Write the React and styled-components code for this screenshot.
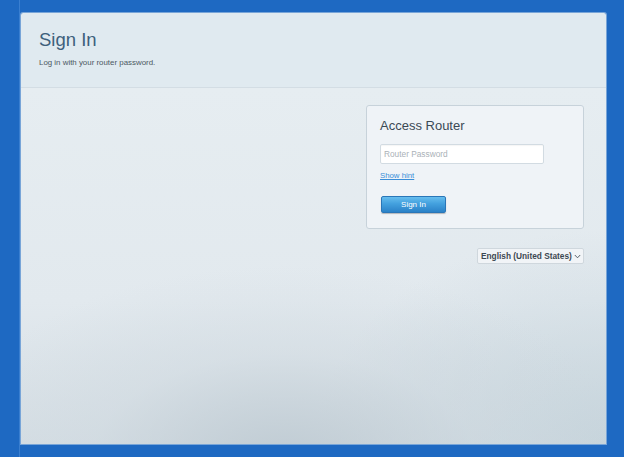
import React from "react";
import styled, { createGlobalStyle } from "styled-components";

const Global = createGlobalStyle`
  html, body { margin: 0; padding: 0; }
  body {
    width: 624px;
    height: 457px;
    overflow: hidden;
    background: #1e69c2;
    font-family: "Liberation Sans", Arial, sans-serif;
  }
`;

const Page = styled.div`
  width: 624px;
  height: 457px;
  box-sizing: border-box;
  padding: 13px 18px 13px 19px;
  display: flex;
`;

const Rail = styled.div`
  width: 1px;
  align-self: stretch;
  margin: -13px 1px -13px 0;
  background: #3a7fd0;
  flex: none;
`;

const Panel = styled.div`
  flex: 1;
  display: flex;
  flex-direction: column;
  border-radius: 2px 2px 0 0;
  overflow: hidden;
  box-shadow: 0 0 0 1px rgba(180, 205, 230, 0.6);
`;

const Header = styled.header`
  height: 75px;
  box-sizing: border-box;
  padding: 15px 18px 0;
  background: #e0eaf0;
  border-bottom: 1px solid #d3dde4;
  flex: none;
`;

const Title = styled.h1`
  margin: 0;
  font-size: 18.5px;
  font-weight: 400;
  color: #3d607c;
  line-height: 24px;
`;

const Subtitle = styled.p`
  margin: 6px 0 0;
  font-size: 7.9px;
  color: #4c5862;
`;

const Body = styled.main`
  flex: 1;
  display: flex;
  flex-direction: column;
  align-items: flex-end;
  padding: 17px 22px 0 0;
  background:
    radial-gradient(ellipse 60% 55% at 45% 105%, rgba(190, 202, 210, 0.95), rgba(205, 215, 222, 0.4) 55%, rgba(230, 237, 241, 0) 100%),
    radial-gradient(ellipse 50% 60% at 100% 100%, rgba(195, 210, 218, 0.8), rgba(230, 237, 241, 0) 100%),
    linear-gradient(180deg, #e6edf1 0%, #e2e9ee 60%, #d5dee4 100%);
`;

const Card = styled.section`
  width: 218px;
  height: 124px;
  box-sizing: border-box;
  border: 1px solid #c7d2da;
  border-radius: 3px;
  background: #eff3f7;
  padding: 12px 13px 0;
  display: flex;
  flex-direction: column;
  align-items: flex-start;
`;

const CardTitle = styled.h2`
  margin: 0;
  font-size: 13px;
  font-weight: 400;
  color: #3b4955;
  line-height: 16px;
`;

const Input = styled.input`
  margin-top: 10px;
  width: 164px;
  height: 20px;
  box-sizing: border-box;
  border: 1px solid #d2dbe2;
  border-radius: 2px;
  background: #ffffff;
  padding: 0 3px;
  font-family: "Liberation Sans", Arial, sans-serif;
  font-size: 8.3px;
  color: #333;
  outline: none;
  box-shadow: inset 0 1px 1px rgba(0, 0, 0, 0.04);
  &::placeholder { color: #aab1b7; }
`;

const Hint = styled.a`
  margin-top: 7px;
  font-size: 7.8px;
  color: #3b8ed8;
  text-decoration: underline;
  cursor: pointer;
`;

const Button = styled.button`
  margin-top: 16px;
  margin-left: 1px;
  width: 65px;
  height: 17px;
  border: 1px solid #2a76b8;
  border-radius: 2px;
  background: linear-gradient(180deg, #66bdee 0%, #43a0de 45%, #2b82c8 100%);
  color: #ffffff;
  font-family: "Liberation Sans", Arial, sans-serif;
  font-size: 8px;
  padding: 0;
  box-shadow: 0 1px 1px rgba(0, 0, 0, 0.25);
  cursor: pointer;
`;

const Lang = styled.div`
  margin-top: 19px;
  width: 107px;
  height: 16px;
  box-sizing: border-box;
  border: 1px solid #cfd7dd;
  border-radius: 2px;
  background: #f1f4f7;
  display: flex;
  align-items: center;
  justify-content: space-between;
  padding: 0 2px 0 3px;
  font-size: 8.3px;
  font-weight: 700;
  color: #3d4852;
`;

const Chevron = () => (
  <svg width="7" height="5" viewBox="0 0 7 5">
    <path d="M0.8 1 L3.5 3.8 L6.2 1" fill="none" stroke="#4a545c" strokeWidth="0.9" />
  </svg>
);

export default function App() {
  return (
    <>
      <Global />
      <Page>
        <Rail />
        <Panel>
          <Header>
            <Title>Sign In</Title>
            <Subtitle>Log in with your router password.</Subtitle>
          </Header>
          <Body>
            <Card>
              <CardTitle>Access Router</CardTitle>
              <Input type="password" placeholder="Router Password" />
              <Hint>Show hint</Hint>
              <Button>Sign In</Button>
            </Card>
            <Lang>
              <span>English (United States)</span>
              <Chevron />
            </Lang>
          </Body>
        </Panel>
      </Page>
    </>
  );
}
